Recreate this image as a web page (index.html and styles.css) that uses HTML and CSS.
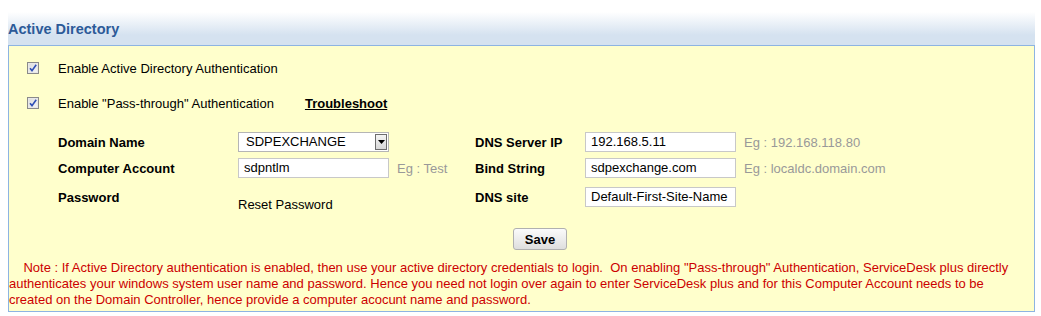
FILE: index.html
```html
<!DOCTYPE html>
<html>
<head>
<meta charset="utf-8">
<link rel="stylesheet" href="styles.css">
</head>
<body>
<div class="panel">
  <div class="head"><span class="title">Active Directory</span></div>
  <div class="box">
    <div class="opts">
      <div class="opt"><span class="cb"><svg width="10" height="10" viewBox="0 0 10 10"><path d="M2 5.2 L4 7.6 L8.2 1.8" fill="none" stroke="#2f4fb5" stroke-width="1.6"/></svg></span><span>Enable Active Directory Authentication</span></div>
      <div class="opt"><span class="cb"><svg width="10" height="10" viewBox="0 0 10 10"><path d="M2 5.2 L4 7.6 L8.2 1.8" fill="none" stroke="#2f4fb5" stroke-width="1.6"/></svg></span><span>Enable "Pass-through" Authentication</span><a class="trouble">Troubleshoot</a></div>
    </div>
    <div class="form">
      <div class="lbl">Domain Name</div>
      <div class="select"><span>SDPEXCHANGE</span><span class="arrow"><svg width="7" height="4" viewBox="0 0 7 4"><path d="M0 0 H7 L3.5 4 Z" fill="#000"/></svg></span></div>
      <div></div>
      <div class="lbl">DNS Server IP</div>
      <div class="input">192.168.5.11</div>
      <div class="eg">Eg : 192.168.118.80</div>

      <div class="lbl">Computer Account</div>
      <div class="input">sdpntlm</div>
      <div class="eg">Eg : Test</div>
      <div class="lbl">Bind String</div>
      <div class="input">sdpexchange.com</div>
      <div class="eg">Eg : localdc.domain.com</div>

      <div class="lbl">Password</div>
      <div class="reset">Reset Password</div>
      <div></div>
      <div class="lbl">DNS site</div>
      <div class="input">Default-First-Site-Name</div>
      <div></div>
    </div>
    <div class="actions"><button class="save">Save</button></div>
    <div class="note">&nbsp;&nbsp;&nbsp;&nbsp;Note : If Active Directory authentication is enabled, then use your active directory credentials to login. &nbsp;On enabling "Pass-through" Authentication, ServiceDesk plus directly authenticates your windows system user name and password. Hence you need not login over again to enter ServiceDesk plus and for this Computer Account needs to be created on the Domain Controller, hence provide a computer acocunt name and password.</div>
  </div>
</div>
</body>
</html>
```
FILE: styles.css
```css
html, body { margin: 0; padding: 0; background: #fff; }
body { font-family: "Liberation Sans", Arial, sans-serif; font-size: 13px; color: #000; }
.panel { margin: 8px 0 0 8px; width: 1027px; }
.head {
  height: 37px;
  background: linear-gradient(to bottom, #ffffff 0px, #ffffff 4px, #d5e2f0 27px, #d5e2f0 37px);
  display: flex; align-items: flex-end;
}
.title { font-weight: bold; font-size: 14.5px; color: #2c5a98; line-height: 18px; padding-bottom: 7px; }
.box {
  background: #ffffcc;
  border: 1px solid #8db4e2;
  padding-bottom: 3px;
}
.opts { padding: 12px 0 0 18px; display: flex; flex-direction: column; gap: 14px; }
.opt { display: flex; align-items: center; height: 20px; }
.opt + .opt { margin-top: 1px; }
.cb {
  width: 10px; height: 10px; border: 1px solid #8a8a8a;
  background: linear-gradient(to bottom right, #dcdcdc, #f6f6f6);
  display: flex; align-items: center; justify-content: center;
  margin-right: 19px; box-shadow: inset 0 0 0 1px #e8e8e8;
}
.trouble { font-weight: bold; text-decoration: underline; margin-left: 31px; color: #000; }
.form {
  margin-top: 19px; padding-left: 49px;
  display: grid;
  grid-template-columns: 180px 159px 78px 110px 159px auto;
  grid-template-rows: 20px 20px 20px;
  row-gap: 6px;
  align-items: center;
}
.form > :nth-child(n+13) { margin-top: 6px; }
.lbl { font-weight: bold; }
.input, .select {
  width: 151px; height: 20px; box-sizing: border-box;
  border: 1px solid #c8c8c8; background: #fff;
  padding: 0 5px; line-height: 18px; font-size: 13px;
}
.select { display: flex; justify-content: space-between; align-items: center; padding: 0 1px 0 7px; border-color: #b5b5b5; }
.arrow {
  width: 12px; height: 16px; box-sizing: border-box;
  border: 1px solid #6d6d6d; background: linear-gradient(#f4f4f4, #d8d8d8);
  display: flex; align-items: center; justify-content: center;
}
.eg { color: #999; }
.reset { align-self: end; transform: translateY(8px); }
.actions { display: flex; justify-content: center; margin-top: 24px; padding-left: 37px; }
.save {
  font-family: "Liberation Sans", Arial, sans-serif; font-weight: bold; font-size: 13px;
  width: 54px; height: 22px; padding: 0;
  border: 1px solid #b0b0b0; border-radius: 3px;
  background: linear-gradient(#fbfbfb, #dedede);
  color: #000;
}
.note { color: #cc0000; font-size: 13px; line-height: 16px; margin-top: 10px; padding-right: 20px; }
```
